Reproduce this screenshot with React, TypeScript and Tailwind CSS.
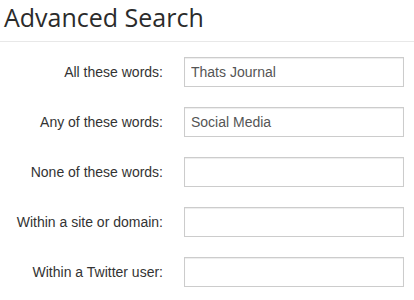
const rows = [
  { label: 'All these words:', value: 'Thats Journal' },
  { label: 'Any of these words:', value: 'Social Media' },
  { label: 'None of these words:', value: '' },
  { label: 'Within a site or domain:', value: '' },
  { label: 'Within a Twitter user:', value: '' },
]

export default function App() {
  return (
    <div className="w-[414px] h-[300px] bg-white overflow-hidden">
      {/* Title */}
      <div className="border-b border-[#e8e8e8] pb-[7px]">
        <h1 className="pl-1 text-[25px] leading-[34px] text-[#2b2b2b] font-['Open_Sans',sans-serif]">
          Advanced Search
        </h1>
      </div>

      {/* Form */}
      <form className="mt-[15px] grid grid-cols-[163px_220px] gap-x-[21px] gap-y-5 items-center font-['Liberation_Sans',Arial,sans-serif] text-sm">
        {rows.map((row) => (
          <div key={row.label} className="contents">
            <label className="text-right text-[#333]">{row.label}</label>
            <input
              type="text"
              defaultValue={row.value}
              className="h-[30px] w-full px-1.5 border border-[#ccc] bg-white text-[#555] shadow-[inset_0_1px_1px_rgba(0,0,0,0.075)] outline-none"
            />
          </div>
        ))}
      </form>
    </div>
  )
}
